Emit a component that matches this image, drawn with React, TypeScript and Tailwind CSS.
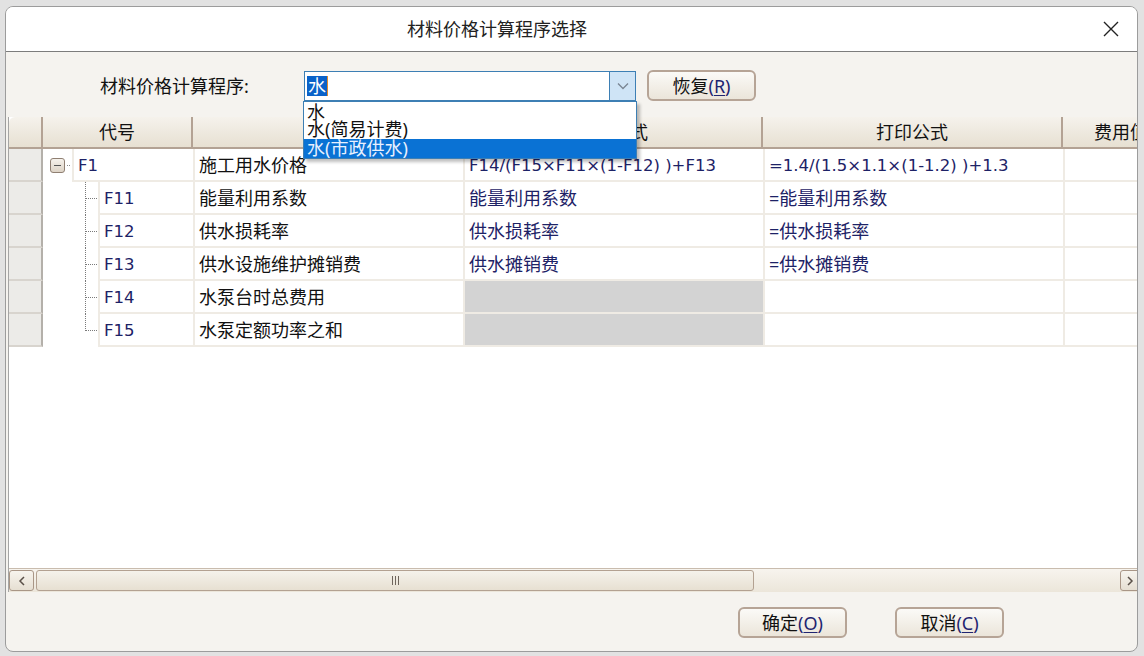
import React from 'react';

type Row = {
  code: string;
  name: string;
  formula?: string;
  print?: string;
  level: number;
  gray?: boolean;
  last?: boolean;
};

const rows: Row[] = [
  { code: 'F1', name: '施工用水价格', formula: 'F14/(F15×F11×(1-F12) )+F13', print: '=1.4/(1.5×1.1×(1-1.2) )+1.3', level: 0 },
  { code: 'F11', name: '能量利用系数', formula: '能量利用系数', print: '=能量利用系数', level: 1 },
  { code: 'F12', name: '供水损耗率', formula: '供水损耗率', print: '=供水损耗率', level: 1 },
  { code: 'F13', name: '供水设施维护摊销费', formula: '供水摊销费', print: '=供水摊销费', level: 1 },
  { code: 'F14', name: '水泵台时总费用', level: 1, gray: true },
  { code: 'F15', name: '水泵定额功率之和', level: 1, gray: true, last: true },
];

const font = "font-['Noto_Sans','Noto_Sans_CJK_SC',sans-serif]";
// latin-only strings (codes, numeric formulas) look like a tahoma/verdana face
const latin = "font-['DejaVu_Sans','Noto_Sans_CJK_SC',sans-serif] text-[16.5px] pt-[3px]";

const isLatin = (s?: string) => !!s && /^[\x00-\x7F×]+$/.test(s);

const Accel: React.FC<{ label: string; k: string }> = ({ label, k }) => (
  <span>
    {label}
    <span className="text-[#1f2470]">
      (<span className="underline underline-offset-2">{k}</span>)
    </span>
  </span>
);

const DlgButton: React.FC<{ label: string; k: string; className?: string }> = ({ label, k, className }) => (
  <button
    className={`h-[31px] w-[109px] rounded-[6px] border-2 border-[#b6a496] bg-gradient-to-b from-[#fbfaf7] to-[#ebe5da] text-[18px] leading-none text-[#111] ${className ?? ''}`}
  >
    <Accel label={label} k={k} />
  </button>
);

// tree connector drawn in the code column
const TreeLines: React.FC<{ last?: boolean }> = ({ last }) => (
  <svg width="55" height="33" className="shrink-0">
    <line x1="42.5" y1="0" x2="42.5" y2={last ? 17 : 33} stroke="#7a7a7a" strokeDasharray="1 1" />
    <line x1="43" y1="16.5" x2="55" y2="16.5" stroke="#7a7a7a" strokeDasharray="1 1" />
  </svg>
);

const ExpandBox = () => (
  <div className="flex h-[33px] w-[29px] shrink-0 items-center pl-[7px]">
    <div className="flex h-[15px] w-[15px] items-center justify-center rounded-[3px] border border-[#8f7f72] bg-gradient-to-b from-[#f6f2ec] to-[#ddd3c6]">
      <div className="h-px w-[7px] bg-[#555]" />
    </div>
    <div className="ml-[2px] h-px w-[3px] border-t border-dotted border-[#888]" />
  </div>
);

const HeaderCell: React.FC<{ children?: React.ReactNode; className?: string }> = ({ children, className }) => (
  <div
    className={`flex h-[32px] items-center justify-center border-r-2 border-b-2 border-[#b3a294] bg-gradient-to-b from-[#f5f2ec] to-[#e7e0d2] text-[18px] text-[#111] ${className ?? ''}`}
  >
    {children}
  </div>
);

const Cell: React.FC<{ text?: string; className?: string }> = ({ text, className }) => (
  <div className={`flex items-center border-l-2 border-b-2 border-[#efebe4] pl-[4px] ${className ?? ''}`}>
    <span className={isLatin(text) ? latin : ''}>{text}</span>
  </div>
);

export default function App() {
  return (
    <div className={`h-[656px] w-[1144px] overflow-hidden bg-[#e2e2e2] pl-[5px] pt-[6px] ${font}`}>
      <div className="flex h-[646px] w-[1133px] flex-col overflow-hidden rounded-[8px] border border-[#9c9c9c] bg-[#f5f3ef]">
        {/* title bar */}
        <div className="flex h-[45px] shrink-0 items-center border-b border-[#7c7c7c] bg-white pl-[401px]">
          <span className="text-[18px] leading-none text-[#222]">材料价格计算程序选择</span>
          <svg width="18" height="18" viewBox="0 0 18 18" className="ml-auto mr-[17px]">
            <path d="M2 2 L16 16 M16 2 L2 16" stroke="#222" strokeWidth="1.4" />
          </svg>
        </div>

        {/* selector row */}
        <div className="flex h-[65px] shrink-0 items-center pl-[94px] pt-[2px]">
          <span className="w-[204px] text-[18px] leading-none text-[#111]">材料价格计算程序:</span>
          <div className="relative z-10 flex h-[30px] w-[332px] items-stretch border border-[#3d7fb4] bg-white">
            <div className="flex flex-1 items-center pl-[2px]">
              <span className="bg-[#0a62c9] px-px text-[18px] leading-[20px] text-white">水</span>
              <span className="h-[20px] w-px bg-[#e08a2a]" />
            </div>
            <div className="flex w-[26px] items-center justify-center border-l border-[#3d7fb4] bg-[#cfe4f6]">
              <svg width="12" height="8" viewBox="0 0 12 8">
                <path d="M1 1.5 L6 6.5 L11 1.5" fill="none" stroke="#7a8593" strokeWidth="1.3" />
              </svg>
            </div>
            {/* open dropdown list */}
            <div className="absolute left-[-2px] top-[29px] w-[334px] border border-[#3d7fb4] bg-white pt-[1px] text-[18px] leading-[18px] text-[#111] shadow-[3px_3px_3px_rgba(0,0,0,0.25)]">
              <div className="h-[17px] pl-[3px]">水</div>
              <div className="h-[19px] pl-[3px]">水(简易计费)</div>
              <div className="h-[19px] bg-[#0a72d4] pl-[3px] leading-[19px] text-[#e8f0ff]">水(市政供水)</div>
            </div>
          </div>
          <DlgButton label="恢复" k="R" className="ml-[11px]" />
        </div>

        {/* table */}
        <div className="ml-[2px] flex flex-1 flex-col overflow-hidden border-l border-[#a5a5a5] bg-white">
          <div className="flex w-[1160px] shrink-0">
            <HeaderCell className="w-[34px] rounded-tl-[6px]" />
            <HeaderCell className="w-[150px]">代号</HeaderCell>
            <HeaderCell className="w-[270px]">名称</HeaderCell>
            <HeaderCell className="w-[300px]">计算公式</HeaderCell>
            <HeaderCell className="w-[300px]">打印公式</HeaderCell>
            <HeaderCell className="w-[106px] justify-start pl-[31px]">费用值</HeaderCell>
          </div>
          {rows.map((r) => (
            <div key={r.code} className="flex h-[33px] w-[1160px] shrink-0 text-[18px] leading-none">
              <div className="w-[34px] border-r-2 border-b-2 border-r-[#b4b0aa] border-b-[#d8d4ce] bg-[#ecebe8]" />
              <div className="flex w-[150px]">
                {r.level === 0 ? <ExpandBox /> : <TreeLines last={r.last} />}
                <Cell text={r.code} className="flex-1 text-[#1d2266]" />
              </div>
              <Cell text={r.name} className="w-[270px] text-[#111]" />
              <Cell text={r.formula} className={`w-[300px] text-[#1d2266] ${r.gray ? 'bg-[#d3d3d3]' : ''}`} />
              <Cell text={r.print} className="w-[300px] text-[#1d2266]" />
              <Cell className="w-[106px]" />
            </div>
          ))}
          <div className="flex-1" />

          {/* horizontal scrollbar */}
          <div className="flex h-[24px] w-[1160px] shrink-0 items-stretch border-t border-[#c9bcae] bg-gradient-to-b from-[#f7f4ee] to-[#ece6da] py-px">
            <div className="flex w-[25px] items-center justify-center rounded-[3px] border border-[#a99686] bg-gradient-to-b from-[#f7f4ee] to-[#e6dfd2]">
              <svg width="8" height="10" viewBox="0 0 8 10">
                <path d="M6 1 L2 5 L6 9" fill="none" stroke="#5a5048" strokeWidth="1.5" />
              </svg>
            </div>
            <div className="ml-[2px] flex w-[718px] items-center justify-center gap-[2px] rounded-[3px] border border-[#b3a191] bg-gradient-to-b from-[#f5f2eb] to-[#e7e0d2]">
              <div className="h-[9px] w-px bg-[#6f655c]" />
              <div className="h-[9px] w-px bg-[#6f655c]" />
              <div className="h-[9px] w-px bg-[#6f655c]" />
            </div>
            <div className="flex-1" />
            <div className="mr-[24px] flex w-[25px] items-center justify-start pl-[5px] rounded-[3px] border border-[#a99686] bg-gradient-to-b from-[#f7f4ee] to-[#e6dfd2]">
              <svg width="8" height="10" viewBox="0 0 8 10">
                <path d="M2 1 L6 5 L2 9" fill="none" stroke="#5a5048" strokeWidth="1.5" />
              </svg>
            </div>
          </div>
        </div>

        {/* footer buttons */}
        <div className="flex h-[59px] shrink-0 items-start justify-end gap-[48px] pr-[133px] pt-[15px]">
          <DlgButton label="确定" k="O" />
          <DlgButton label="取消" k="C" />
        </div>
      </div>
    </div>
  );
}
